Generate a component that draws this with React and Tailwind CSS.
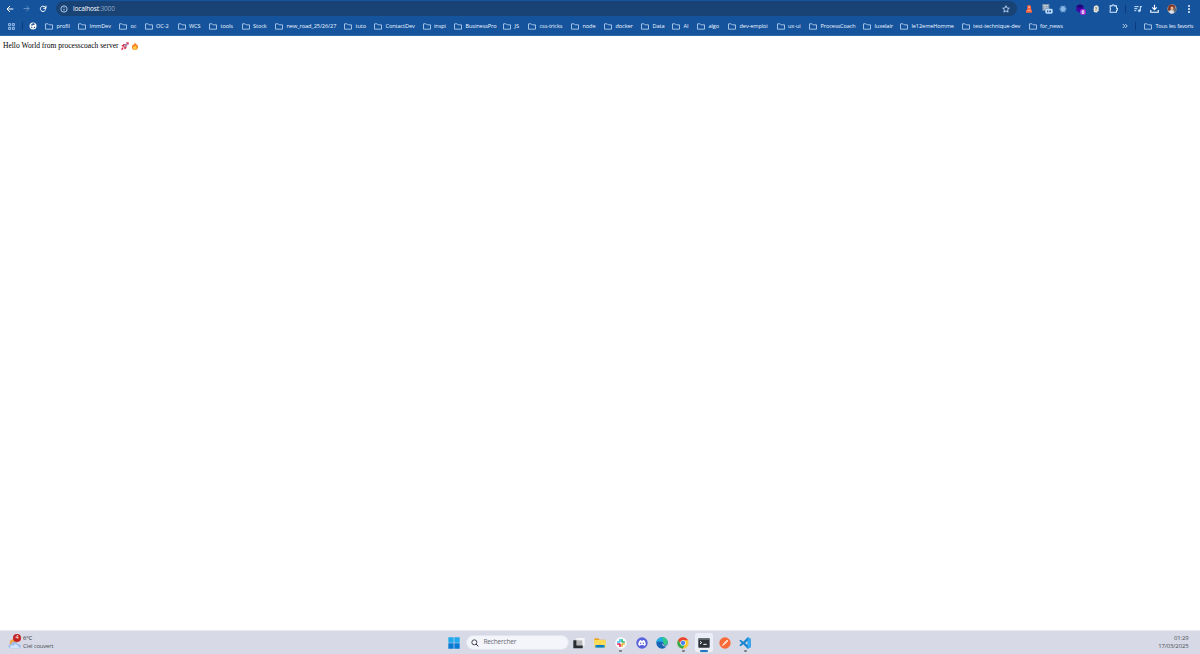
import React from "react";

const bookmarks = [
  ["profil", 33], ["ImmDev", 41], ["oc", 25.5], ["OC-2", 33], ["WCS", 31.5], ["tools", 32.5],
  ["Stock", 33.5], ["new_road_25/26/27", 69], ["tuto", 30], ["ContactDev", 48.5], ["inspi", 31.5],
  ["BusinessPro", 49], ["JS", 25], ["css-tricks", 43], ["node", 33], ["docker", 37], ["Data", 31],
  ["AI", 25], ["algo", 31], ["dev-emploi", 48.5], ["ux-ui", 32.5], ["ProcessCoach", 54],
  ["luxelair", 37], ["le12emeHomme", 61.5], ["test-technique-dev", 67], ["for_news", 40],
];

function Icon({ children, className = "size-2", box = "0 0 24 24" }) {
  return (
    <svg viewBox={box} className={`shrink-0 ${className}`} fill="none" stroke="currentColor" strokeWidth="2.5">
      {children}
    </svg>
  );
}

function Folder() {
  return (
    <Icon className="h-[7px] w-[8px] text-[#c9e1fb]" box="0 0 24 21">
      <path d="M1.500 2.500h8l3 3h10v13h-21z" strokeWidth="2.3" strokeLinejoin="round" />
    </Icon>
  );
}

function Toolbar() {
  return (
    <div className="flex h-[17px] items-center pl-[6px] pr-[6px] text-white">
      <Icon className="size-[8px]"><path d="M22 12H3M12 3l-9 9 9 9" strokeWidth="3" /></Icon>
      <Icon className="ml-[9px] size-[7px] text-[#6b97cc]"><path d="M2 12h19M12 3l9 9-9 9" strokeWidth="3" /></Icon>
      <Icon className="ml-[9px] size-[8px]"><path d="M20 13a8 8 0 1 1-2-7l3 3M21 2v8h-8" strokeWidth="3" /></Icon>
      <div className="ml-[9px] flex h-[15px] w-[961px] shrink-0 items-center rounded-full bg-[#194375] pl-[4px] pr-[7px]">
        <Icon className="size-[8px] text-[#c6e1ff]">
          <circle cx="12" cy="12" r="9.500" /><path d="M12 11v6M12 6.5v2.5" />
        </Icon>
        <span className="ml-[5px] pt-[1.500px] text-[6.5px] leading-none tracking-[-0.15px] text-white">localhost<span className="text-[#8fa8c5]">:3000</span></span>
        <Icon className="ml-auto size-[8px] text-[#c6e1ff]"><path d="m12 2 3 7 7 .7-5.300 4.700 1.500 7-6.200-3.600-6.200 3.600 1.500-7L2 9.700 9 9z" /></Icon>
      </div>
      <svg className="ml-[8px] size-[8px] shrink-0" viewBox="0 0 24 24">
        <path fill="#ff6640" d="M7 1h8l3 3v8l3 5v6H3v-6l4-5z" /><path fill="#ffc1a3" d="M9 5h6v3H9zM8 15h8v2H8z" />
      </svg>
      <svg className="ml-[9px] h-[11px] w-[11px] shrink-0" viewBox="0 0 33 33">
        <rect x="1" y="3" width="21" height="20" fill="#7e96ad" /><path d="M4 8h14M4 12h7M14 15l4-5M5 20l7-7" stroke="#eef3f9" strokeWidth="2" />
        <rect x="10" y="17" width="22" height="15" rx="4" fill="#b9dbff" /><path d="M15 25h4m3 0h5" stroke="#245594" strokeWidth="5" />
      </svg>
      <svg className="ml-[6px] size-[8px] shrink-0" viewBox="0 0 24 24" fill="none" stroke="#a9d3fc" strokeWidth="1.8">
        <ellipse cx="12" cy="12" rx="10" ry="4" /><ellipse cx="12" cy="12" rx="10" ry="4" transform="rotate(60 12 12)" /><ellipse cx="12" cy="12" rx="10" ry="4" transform="rotate(120 12 12)" /><circle cx="12" cy="12" r="2" fill="#a9d3fc" />
      </svg>
      <div className="relative ml-[9px] h-[9px] w-[10px] shrink-0">
        <svg className="block h-[9px] w-[8px]" viewBox="0 0 24 27"><path fill="#3d08a6" d="m12 1 11 6v13l-11 6-11-6V7z" /><path fill="#210477" d="m12 1 11 6-11 7L1 7z" /></svg>
        <span className="absolute bottom-[-2px] right-0 flex h-[6px] w-[6px] items-center justify-center rounded-[2px] bg-[#9b2bd5] text-[5px] font-bold leading-none">6</span>
      </div>
      <svg className="ml-[6px] size-[8px] shrink-0" viewBox="0 0 24 24"><path fill="#ece6d8" d="m7 3 8-2 5 4v12l-7 6-8-3V9z" /><path d="M9 8h7M10 12l5-2M10 17l6-3" stroke="#6b7c86" strokeWidth="2" /></svg>
      <Icon className="ml-[9px] size-[9px] text-[#d4e9ff]"><path d="M3 5h5a3 3 0 0 1 6 0h6v6a3 3 0 0 1 0 6v5H3v-6a3 3 0 0 0 0-5z" strokeWidth="2.7" /></Icon>
      <span className="ml-[7px] h-[8px] w-px shrink-0 bg-[#0d3b7a]" />
      <Icon className="ml-[8px] size-[8px] text-[#cce4ff]"><path d="M1 5h13M1 11h9M1 17h6M19 4v13M18 5h6" strokeWidth="3" /><circle cx="16" cy="17" r="3" fill="currentColor" /></Icon>
      <Icon className="ml-[8px] size-[9px]"><path d="M12 2v13M6 9l6 6 6-6M2 16v6h20v-6" strokeWidth="3" /></Icon>
      <svg className="ml-[8px] size-[10px] shrink-0" viewBox="0 0 30 30">
        <circle cx="15" cy="15" r="14" fill="#b99f91" /><path fill="#7c3529" d="M5 5c6-6 17-5 20 4l-5 8-7-5-4 9-7-3z" /><circle cx="15" cy="12" r="4.500" fill="#f2ba91" /><path fill="#d8e3ed" d="m5 22 9-4 7 5-1 5-9 1z" /><path fill="#4d667b" d="M22 13h7l-4 12h-4z" />
      </svg>
      <Icon className="ml-[8px] size-[8px]"><g fill="currentColor" stroke="none"><circle cx="12" cy="3" r="2.800" /><circle cx="12" cy="12" r="2.800" /><circle cx="12" cy="21" r="2.800" /></g></Icon>
    </div>
  );
}

function BookmarksBar() {
  return (
    <div className="flex h-[19px] items-center border-b border-[#326aae] pl-[8px] text-[5.6px] leading-none tracking-[-0.09px] text-[#eff7ff]">
      <Icon className="size-[7px] text-[#a9cdf5]"><path d="M2 2h7v7H2zM15 2h7v7h-7zM2 15h7v7H2zM15 15h7v7h-7z" strokeWidth="3" /></Icon>
      <span className="ml-[7px] h-[8px] w-px bg-[#0d3b7a]" />
      <svg className="ml-[6px] size-[8px] shrink-0" viewBox="0 0 24 24"><circle cx="12" cy="12" r="10.500" fill="#fff" /><path fill="#174d90" d="m13 3 5 3-3 3-4-1-1 4-4-2V8zM6 14l4 1v4l-3-1zM15 14h4l-2 4-3 1z" /></svg>
      <div className="ml-[8px] flex shrink-0">
        {bookmarks.map(([name, width]) => (
          <div key={name} className="flex shrink-0 items-center gap-[3.5px] whitespace-nowrap" style={{ width }}>
            <Folder /><span className="pt-px">{name}</span>
          </div>
        ))}
      </div>
      <div className="ml-auto flex shrink-0 items-center pr-[7px]">
        <Icon className="size-[6px]"><path d="m3 4 8 8-8 8M13 4l8 8-8 8" strokeWidth="3" /></Icon>
        <span className="ml-[7px] mr-[8px] h-[8px] w-px bg-[#0d3b7a]" />
        <Folder /><span className="ml-[3.500px] w-[37.500px] whitespace-nowrap pt-px tracking-[-0.22px] [word-spacing:0.5px]">Tous les favoris</span>
      </div>
    </div>
  );
}

function AppIcon({ name }) {
  return (
    <svg viewBox="0 0 36 36" className="block size-[12px]">
      {name === "desktop" && <><path fill="#f4f4f6" d="M10 3h25v24H10z" /><path fill="#272d31" d="M1 10h10v15h18v9H1z" /><path fill="#b7b7ba" d="M11 10h17v15H11z" /></>}
      {name === "files" && <><path fill="#e9a720" d="M1 4h12l4 4h17v10H1z" /><path fill="#ffdc58" d="M1 9h34v23H1z" /><path fill="#168bd7" d="M4 24h28v8H4z" /><path fill="#086fb5" d="M9 25h18v4H9z" /></>}
      {name === "slack" && <><circle cx="18" cy="18" r="17" fill="#fff" /><g strokeWidth="5" strokeLinecap="round"><path stroke="#36c5f0" d="M15 8v5M8 15h6" /><path stroke="#2eb67d" d="M22 15h6M21 8v6" /><path stroke="#ecb22e" d="M21 22v6M22 21h6" /><path stroke="#e01e5a" d="M8 21h6M15 22v6" /></g></>}
      {name === "discord" && <><circle cx="18" cy="18" r="17" fill="#5862dc" /><path fill="#fff" d="m12 10 3-1 1 2h4l1-2 4 1c3 4 5 9 4 14l-5 3-2-3h-8l-2 3-5-3c-1-5 1-10 5-14z" /><g fill="#5862dc"><ellipse cx="14" cy="19" rx="2" ry="2.500" /><ellipse cx="22" cy="19" rx="2" ry="2.500" /></g></>}
      {name === "edge" && <><circle cx="18" cy="18" r="17" fill="#1764b4" /><path fill="#20aee0" d="M1 18C1-3 32-5 35 14c1 8-6 11-12 10 3-3 1-8-4-9C12 13 5 12 1 18z" /><path fill="#35c987" d="M16 1c12-2 19 7 19 14 0 8-6 10-12 9 3-3 1-8-3-9 3-4 1-10-4-14z" /><path fill="#d7d9e6" d="M21 18c3 4-1 6 4 8 3 1 7 0 10-3v5l-5 1c-8 0-14-5-9-11z" /></>}
      {name === "chrome" && <><circle cx="18" cy="18" r="17" fill="#fcc934" /><path fill="#e94335" d="M3 10a17 17 0 0 1 30 0H18l-8 8z" /><path fill="#34a853" d="M3 10a17 17 0 0 0 14 25l8-14H11z" /><circle cx="18" cy="18" r="8" fill="#fff" /><circle cx="18" cy="18" r="6.500" fill="#4285f4" /></>}
      {name === "terminal" && <><rect x="1" y="4" width="34" height="28" rx="2" fill="#2d3239" /><path fill="#747b82" d="M1 4h34v4H1z" /><path d="m6 13 5 4-5 4M16 22h10" fill="none" stroke="#fff" strokeWidth="3" /></>}
      {name === "postman" && <><circle cx="18" cy="18" r="17" fill="#fb6b38" /><path d="m10 26 5-8 9-9 3 3-9 9z" fill="#ffd1c0" stroke="#fff" strokeWidth="1.500" /></>}
      {name === "vscode" && <path fillRule="evenodd" fill="#1683ce" d="m26 1 9 4v26l-9 4L13 22l-8 6-4-3 7-7-7-7 4-3 8 6zM26 11l-8 7 8 7z" />}
      {name === "vscode" && <path fill="#35a9f1" d="m26 1 9 4v26l-9 4z" />}
    </svg>
  );
}

const apps = [
  ["desktop", ""], ["files", ""], ["slack", "running"], ["discord", ""], ["edge", ""],
  ["chrome", "running"], ["terminal", "active"], ["postman", ""], ["vscode", "running"],
];

function Taskbar() {
  return (
    <footer className="flex h-[23px] shrink-0 items-center justify-between bg-[#d7d9e6] text-[#4d5057] shadow-[0_-1px_0_#e9eaf0]">
      <div className="flex w-[448px] shrink-0 items-center pl-[8px]">
        <div className="relative h-[16px] w-[14px] shrink-0">
          <svg className="block h-[16px] w-[13px]" viewBox="0 0 39 48"><circle cx="16" cy="24" r="11" fill="#efa84e" /><path fill="#9bbcec" d="M7 40C-2 37 1 28 9 28c3-10 16-10 20-1 11-1 13 13 3 13z" /><path fill="#d0e3ff" d="M6 35c2-6 8-5 10-3 5-8 14-4 14 2 6-1 6 3 2 5H8z" /></svg>
          <span className="absolute -top-px right-[1px] flex size-[8px] items-center justify-center rounded-full bg-[#c42323] text-[5.500px] leading-none text-white">4</span>
        </div>
        <div className="ml-px pb-px text-[6px] leading-[8px] tracking-[-0.2px]"><p className="text-[#292b30]">6°C</p><p>Ciel couvert</p></div>
      </div>
      <div className="flex shrink-0 items-center">
        <svg viewBox="0 0 36 36" className="size-[12px]"><path fill="#22a9ec" d="M1 1h16v16H1zM19 1h16v16H19z" /><path fill="#087bd5" d="M1 19h16v16H1zM19 19h16v16H19z" /></svg>
        <div className="ml-[6px] flex h-[15px] w-[103px] items-center rounded-full border border-[#e3e5ee] bg-[#f3f5fb] pl-[4px]">
          <Icon className="size-[8px] text-[#282b31]"><circle cx="10" cy="10" r="7.500" /><path d="m15 15 7 7" strokeWidth="3" /></Icon>
          <span className="ml-[4.500px] text-[6.500px] leading-none tracking-[-0.18px] text-[#666970]">Rechercher</span>
        </div>
        <div className="flex">
          {apps.map(([name, state]) => (
            <div key={name} className="relative flex h-[23px] w-[20.75px] items-center justify-center">
              {state === "active" && <span className="absolute top-[2px] h-[19px] w-[18px] rounded-[2px] bg-[#eceef7]" />}
              <div className="relative"><AppIcon name={name} /></div>
              {state === "running" && <span className="absolute bottom-[2px] h-[2px] w-[3px] rounded-full bg-[#777a82]" />}
              {state === "active" && <span className="absolute bottom-[2px] h-[2px] w-[8px] rounded-full bg-[#2473bb]" />}
            </div>
          ))}
        </div>
      </div>
      <div className="ml-auto pb-px pr-[11.500px] text-right text-[6px] leading-[8px] tracking-[-0.15px]"><p>01:29</p><p>17/03/2025</p></div>
    </footer>
  );
}

export default function App() {
  return (
    <div className="flex h-screen w-full flex-col overflow-hidden bg-white font-['Open_Sans','Noto_Sans',sans-serif]">
      <header className="h-[36px] shrink-0 bg-[#15539d]"><Toolbar /><BookmarksBar /></header>
      <main className="flex-1 pl-[3px] pt-[5px] font-['Liberation_Serif',serif] text-[7.5px] leading-[9px] text-black">
        <div className="flex items-center">
          <span>Hello World from processcoach server</span>
          <svg className="ml-[2.500px] size-[8px]" viewBox="0 0 24 24"><path fill="#db274c" d="m1 12 7-6 6 1 3 4-1 7-5 5-1-6-3-3zM2 18l4-2 2 2-3 5-4 1z" /><path fill="#c2a8bf" d="M22 2C14 2 10 8 8 13l3 3C17 14 22 9 22 2z" /><path fill="#e23b60" d="M15 2c4-2 8-1 8-1s1 4-1 8z" /><circle cx="15" cy="9" r="2" fill="#56627f" /></svg>
          <svg className="ml-[2.500px] size-[8px]" viewBox="0 0 24 24"><path fill="#f58220" d="M11 0c1 6 10 7 10 15 0 6-4 9-9 9s-10-3-9-10c0-3 2-5 4-8l1 3c3-3 3-5 3-9z" /><path fill="#ffc947" d="M12 9c1 4 5 4 5 9 0 7-10 7-11 0 0-3 1-4 3-6l1 3c2-1 2-3 2-6z" /></svg>
        </div>
      </main>
      <Taskbar />
    </div>
  );
}
